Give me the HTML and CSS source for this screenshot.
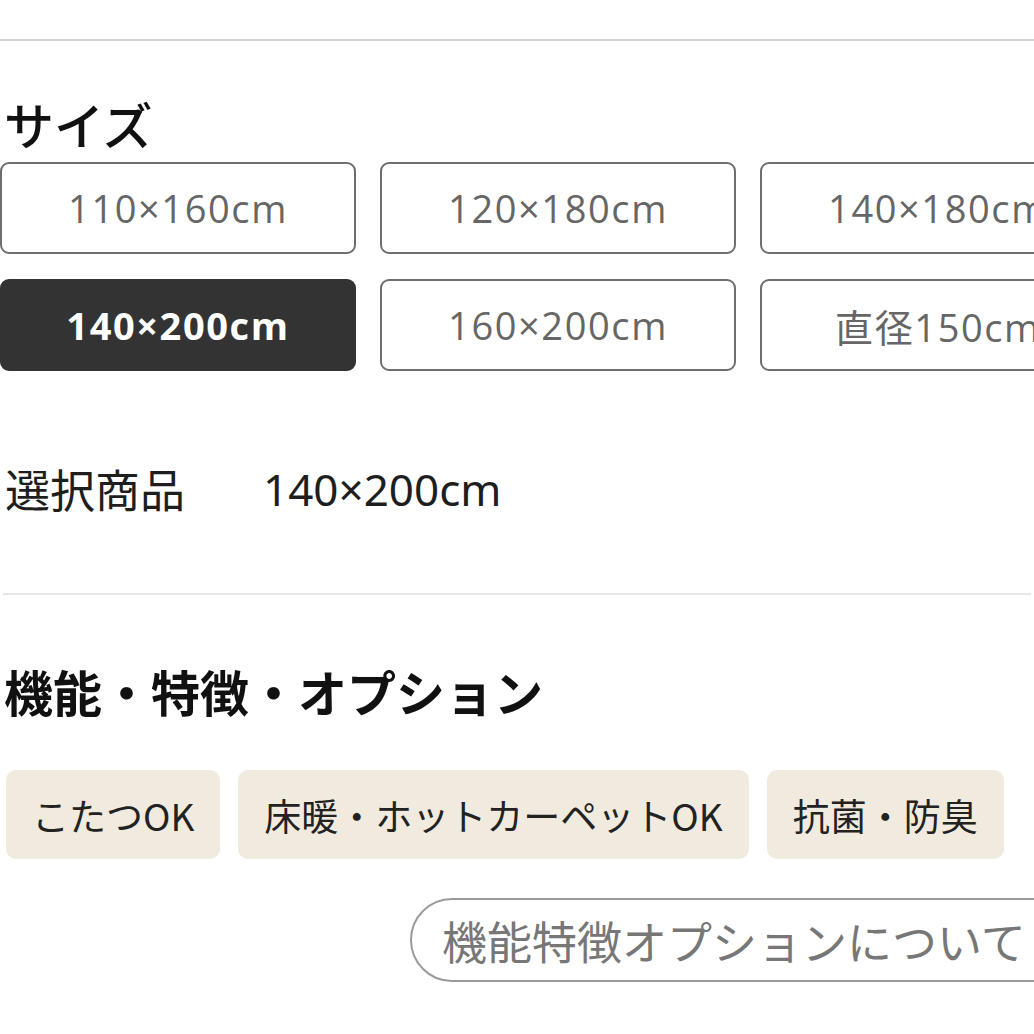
FILE: index.html
```html
<!DOCTYPE html>
<html lang="ja">
<head>
<meta charset="utf-8">
<title>サイズ</title>
<link rel="stylesheet" href="styles.css">
</head>
<body>
<div class="page">
  <div class="topline"></div>
  <h2 class="size-title">サイズ</h2>
  <div class="size-grid">
    <div class="size-btn">110×160cm</div>
    <div class="size-btn">120×180cm</div>
    <div class="size-btn">140×180cm</div>
    <div class="size-btn selected">140×200cm</div>
    <div class="size-btn">160×200cm</div>
    <div class="size-btn">直径150cm</div>
  </div>
  <div class="selected-row">
    <span class="sel-label">選択商品</span>
    <span class="sel-value">140×200cm</span>
  </div>
  <div class="divider"></div>
  <h2 class="feat-title">機能・特徴・オプション</h2>
  <div class="tags">
    <span class="tag">こたつOK</span>
    <span class="tag">床暖・ホットカーペットOK</span>
    <span class="tag">抗菌・防臭</span>
  </div>
  <div class="pill-row">
    <div class="pill">機能特徴オプションについて</div>
  </div>
</div>
</body>
</html>
```
FILE: styles.css
```css
html, body {
  margin: 0;
  padding: 0;
  background: #ffffff;
  overflow: hidden;
}
body {
  font-family: "Noto Sans CJK JP", "Noto Sans", sans-serif;
  color: #222222;
}
.page {
  width: 1200px;
}
.topline {
  height: 2px;
  width: 1034px;
  background: #d2d2d2;
  margin-top: 39px;
}
.size-title {
  margin: 58px 0 0 4px;
  font-size: 50px;
  font-weight: 500;
  line-height: 48px;
  color: #111111;
}
.size-grid {
  margin-top: 15px;
  display: grid;
  grid-template-columns: repeat(3, 356px);
  column-gap: 24px;
  row-gap: 25px;
}
.size-btn {
  box-sizing: border-box;
  height: 92px;
  border: 2px solid #6e6e6e;
  border-radius: 9px;
  display: flex;
  align-items: center;
  justify-content: center;
  font-family: "Open Sans", "Noto Sans CJK JP", sans-serif;
  font-size: 38px;
  letter-spacing: 1.6px;
  color: #666666;
}
.size-btn.selected {
  background: #333333;
  border-color: #333333;
  color: #ffffff;
  font-weight: 700;
}
.selected-row {
  margin-top: 94px;
  display: flex;
  align-items: center;
  height: 48px;
  font-size: 45px;
  line-height: 48px;
  color: #1e1e1e;
}
.sel-label {
  width: 263px;
  padding-left: 5px;
  box-sizing: border-box;
}
.sel-value {
  font-family: "Noto Sans", "Open Sans", sans-serif;
  font-size: 44px;
}
.divider {
  margin: 80px 0 0 3px;
  width: 1028px;
  height: 2px;
  background: #e6e6e6;
}
.feat-title {
  margin: 71px 0 0 4px;
  font-size: 49px;
  font-weight: 700;
  line-height: 50px;
  color: #111111;
}
.tags {
  margin: 54px 0 0 6px;
  display: flex;
  gap: 18px;
}
.tag {
  height: 89px;
  padding: 0 26px;
  display: flex;
  align-items: center;
  background: #f1ebdf;
  border-radius: 10px;
  font-size: 37px;
  color: #222222;
  white-space: nowrap;
}
.pill-row {
  margin-top: 39px;
  padding-left: 410px;
}
.pill {
  box-sizing: border-box;
  width: 760px;
  height: 84px;
  border: 2px solid #9a9a9a;
  border-radius: 42px;
  display: flex;
  align-items: center;
  padding-left: 30px;
  font-size: 45px;
  color: #777777;
  white-space: nowrap;
}
```
